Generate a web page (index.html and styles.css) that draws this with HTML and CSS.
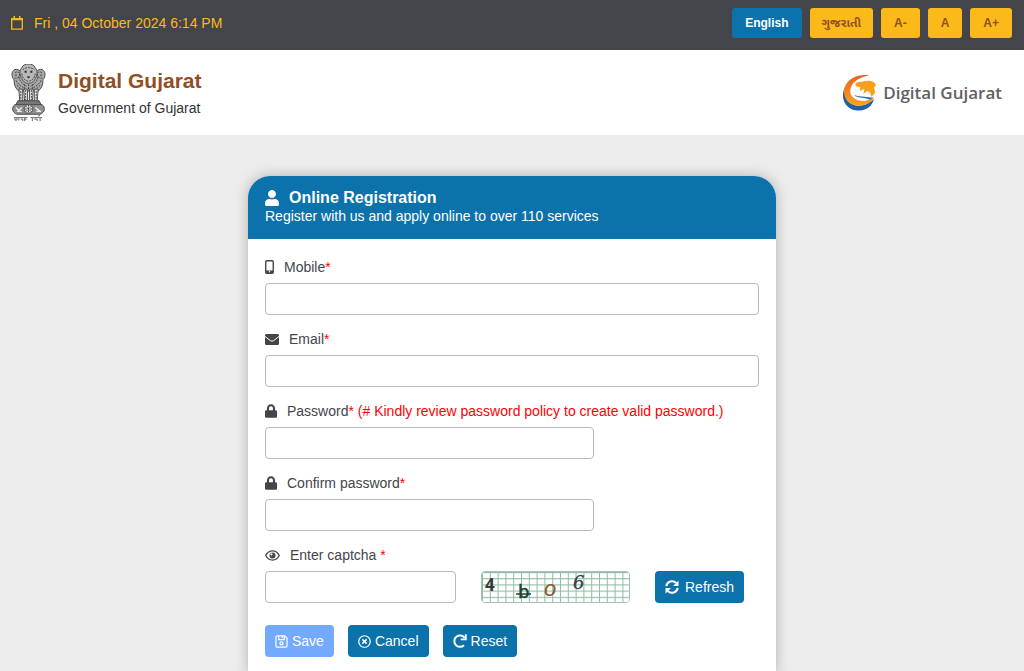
FILE: index.html
```html
<!DOCTYPE html>
<html lang="en">
<head>
<meta charset="utf-8">
<meta name="viewport" content="width=device-width, initial-scale=1">
<title>Digital Gujarat - Online Registration</title>
<link rel="stylesheet" href="styles.css">
</head>
<body>
<div class="topbar">
  <div class="date">
    <svg class="date-icon" viewBox="0 0 12 14" aria-hidden="true"><path d="M0.700 2.700h10.600v10.500H0.700z" fill="none" stroke="currentColor" stroke-width="1.300"/><path d="M0.700 2h10.600v2.200H0.700zM2.500 0h1.500v3H2.500zM8 0h1.500v3H8z" fill="currentColor"/></svg>
    <span>Fri , 04 October 2024 6:14 PM</span>
  </div>
  <div class="tools">
    <button class="tool tool-active" type="button">English</button>
    <button class="tool tool-gu" type="button" lang="gu">ગુજરાતી</button>
    <button class="tool" type="button">A-</button>
    <button class="tool" type="button">A</button>
    <button class="tool" type="button">A+</button>
  </div>
</div>

<header class="brand">
  <svg class="emblem" viewBox="0 0 36 60" role="img" aria-label="State emblem of India">
    <g fill="#a8a8a8" stroke="#4b4b4b" stroke-width="1">
      <path d="M9 7C4 3 0 8 1 12c0 3 2 3 2 5 0 5 2 9 5 11h20c3-2 5-6 5-11 0-2 2-2 2-5 1-4-3-9-8-5z"/>
      <path d="M11 4c1-3 4-4 7-4s6 1 7 4c3 3 2 8 0 11-2 4-4 5-7 5s-5-1-7-5c-2-3-3-8 0-11z" fill="#b8b8b8"/>
      <path d="M8 26h4l0 13H9zM13 26h4v13h-3zM19 26h4l-1 13h-3zM24 26h4l-1 13h-3z" fill="#ddd"/>
      <path d="M7 38h22l2 4H5z" fill="#777"/>
      <path d="M4 42h28c4 3 3 8-2 10H6c-5-2-6-7-2-10z" fill="#909090"/>
      <circle cx="18" cy="46.500" r="4.500" fill="#ddd"/>
    </g>
    <g fill="none" stroke="#444" stroke-width="1" stroke-dasharray="2 1">
      <path d="M4 9c3-2 5 0 5 3-1 3-4 3-6 2M32 9c-3-2-5 0-5 3 1 3 4 3 6 2M5 17c2 4 5 6 9 8M31 17c-2 4-5 6-9 8M8 13c1 5 4 8 8 10M28 13c-1 5-4 8-8 10M6 22l4 4M30 22l-4 4"/>
      <path d="M12 6c3-3 9-3 12 0M11 10c1 5 3 7 7 8 4-1 6-3 7-8M14 21v5M18 21v6M22 21v5M10 28v10M15 27v11M21 27v11M26 28v10"/>
      <path d="M18 42v9M14 46.500h8M15 43.500l6 6M21 43.500l-6 6"/>
    </g>
    <path d="M5 45l3 3 3-3M6 49h5M25 45l5 4M26 49h5" fill="none" stroke="#eee" stroke-width="1.400"/>
    <path d="M14 7h2v2h-2zM20 7h2v2h-2zM16 13h4l-2 2zM4 11h2v1H4zM30 11h2v1h-2z" fill="#222"/>
    <path d="M3 55.500h14M20 55.500h12M4 56v2h2v-2M8 56v2.500M10 57h2v2M14 56v3M16 57h-2M22 56v3M24 57h3v2M30 56v3M28 54l2-1" stroke="#666" stroke-width="1" fill="none"/>
  </svg>
  <div class="brand-text">
    <h1>Digital Gujarat</h1>
    <p>Government of Gujarat</p>
  </div>
  <div class="logo">
    <svg class="logo-mark" viewBox="0 0 36 38" aria-hidden="true">
      <defs><linearGradient id="orange" x1="0" y1="0" x2="0" y2="1"><stop offset="0" stop-color="#e9632a"/><stop offset="1" stop-color="#f9a41d"/></linearGradient></defs>
      <path d="M4 11C-4 25 5 38 18 37c8 0 13-5 15-12-4 4-9 7-15 7C5 32 1 22 4 11z" fill="#205fa6"/>
      <path d="M28 1C12-2 1 9 2 19c1 8 8 14 17 13 7-1 12-4 14-9-5 3-9 5-14 4C11 26 7 20 9 14 11 7 18 3 28 1z" fill="url(#orange)"/>
      <path d="M14 9c3-2 6-1 8-2 4-1 8-1 11 1l2 3-2 2 1 6-4 4c0-4-2-5-4-6l-4 3 1-5-5 2 1-4-5-1z" fill="#f8a01d"/>
      <path d="M12 21c6 2 11 1 20 3l-3 2c-6-3-11-1-17-5z" fill="#3174b5"/>
    </svg>
    <span>Digital Gujarat</span>
  </div>
</header>

<main class="page">
  <form class="card">
    <div class="card-head">
      <h2><svg class="icon-user" viewBox="0 0 448 512" aria-hidden="true"><path fill="currentColor" d="M224 256c70.700 0 128-57.300 128-128S294.700 0 224 0 96 57.300 96 128s57.300 128 128 128zm89.600 32h-16.700c-22.200 10.200-46.900 16-72.900 16s-50.600-5.800-72.900-16h-16.700C60.200 288 0 348.200 0 422.400V464c0 26.500 21.500 48 48 48h352c26.500 0 48-21.500 48-48v-41.600c0-74.200-60.200-134.400-134.400-134.400z"/></svg>Online Registration</h2>
      <p>Register with us and apply online to over 110 services</p>
    </div>
    <div class="card-body">
      <div class="field">
        <label for="mobile"><svg class="icon-mobile" viewBox="0 0 9 14" aria-hidden="true"><rect x="0.750" y="0.750" width="7.500" height="12.500" rx="1" fill="none" stroke="currentColor" stroke-width="1.400"/><path d="M1 10.500h7V13H1z" fill="currentColor"/><circle cx="4.500" cy="11.800" r="0.700" fill="#fff"/></svg><span>Mobile<b class="req">*</b></span></label>
        <input class="box" id="mobile" type="tel">
      </div>
      <div class="field">
        <label for="email"><svg class="icon-mail" viewBox="0 0 14 11" aria-hidden="true"><rect width="14" height="11" rx="1.300" fill="currentColor"/><path d="M0 2.500l5.500 4.200q1.500 1 3 0L14 2.500" fill="none" stroke="#fff" stroke-width="1"/></svg><span>Email<b class="req">*</b></span></label>
        <input class="box" id="email" type="email">
      </div>
      <div class="field">
        <label for="password"><svg class="icon-lock" viewBox="0 0 448 512" aria-hidden="true"><path fill="currentColor" d="M400 224h-24v-72C376 68.200 307.800 0 224 0S72 68.200 72 152v72H48c-26.500 0-48 21.500-48 48v192c0 26.500 21.500 48 48 48h352c26.500 0 48-21.500 48-48V272c0-26.500-21.500-48-48-48zm-104 0H152v-72c0-39.700 32.300-72 72-72s72 32.300 72 72v72z"/></svg><span>Password<b class="req">* (# Kindly review password policy to create valid password.)</b></span></label>
        <input class="box box-medium" id="password" type="password">
      </div>
      <div class="field">
        <label for="confirm"><svg class="icon-lock" viewBox="0 0 448 512" aria-hidden="true"><path fill="currentColor" d="M400 224h-24v-72C376 68.200 307.800 0 224 0S72 68.200 72 152v72H48c-26.500 0-48 21.500-48 48v192c0 26.500 21.500 48 48 48h352c26.500 0 48-21.500 48-48V272c0-26.500-21.500-48-48-48zm-104 0H152v-72c0-39.700 32.300-72 72-72s72 32.300 72 72v72z"/></svg><span>Confirm password<b class="req">*</b></span></label>
        <input class="box box-medium" id="confirm" type="password">
      </div>
      <div class="field">
        <label for="captcha"><svg class="icon-eye" viewBox="0 0 15 11" aria-hidden="true"><path d="M0.700 5.500C4-0.600 11-0.600 14.300 5.500 11 11.600 4 11.600 0.700 5.500z" fill="none" stroke="currentColor" stroke-width="1.300"/><circle cx="7.500" cy="5.500" r="3" fill="currentColor"/><circle cx="6.400" cy="4.400" r="1.100" fill="#fff"/></svg><span>Enter captcha <b class="req">*</b></span></label>
        <div class="captcha-row">
          <input class="box box-small" id="captcha" type="text">
          <svg class="captcha" viewBox="0 0 147 30" role="img" aria-label="Captcha">
            <defs><pattern id="grid" width="7.800" height="6.200" patternUnits="userSpaceOnUse"><path d="M0 0.500H7.800M0.500 0V6.200" stroke="#8fbda0" stroke-width="1"/></pattern></defs>
            <rect width="147" height="30" fill="#fff"/><rect width="147" height="30" fill="url(#grid)"/>
            <text x="3" y="19" class="captcha-sans" fill="#3d3833">4</text>
            <text x="36" y="26" class="captcha-mark" fill="#164432" stroke="#164432">b</text>
            <path d="M34 22h15" stroke="#164432" stroke-width="1.500"/>
            <text x="62" y="24" class="captcha-script" fill="#8a5c25">o</text>
            <text x="91" y="17" class="captcha-serif" fill="#34404d" stroke="#34404d">6</text>
          </svg>
          <button class="btn btn-refresh" type="button"><svg class="icon-refresh" viewBox="0 0 14 14" aria-hidden="true"><path d="M1.300 6.200A5.800 5.800 0 0 1 11.200 3M12.700 7.800A5.800 5.800 0 0 1 2.800 11" fill="none" stroke="currentColor" stroke-width="2"/><path d="M13.500 0.500v5.500H8zM0.500 13.500V8H6z" fill="currentColor"/></svg>Refresh</button>
        </div>
      </div>
      <div class="actions">
        <button class="btn" type="submit" disabled><svg class="icon-action" viewBox="0 0 14 14" aria-hidden="true"><path d="M2.500 1h8L13 3.500v8q0 1.500-1.500 1.500h-9Q1 13 1 11.500v-9Q1 1 2.500 1zM4 1v4h6V1M7.800 1v2.500" fill="none" stroke="currentColor" stroke-width="1.300"/><circle cx="7" cy="9" r="1.700" fill="none" stroke="currentColor" stroke-width="1.300"/></svg>Save</button>
        <button class="btn" type="button"><svg class="icon-action" viewBox="0 0 14 14" aria-hidden="true"><circle cx="7" cy="7" r="6.200" fill="none" stroke="currentColor" stroke-width="1.300"/><path d="M4.700 4.700l4.600 4.600M9.300 4.700L4.700 9.300" stroke="currentColor" stroke-width="1.600"/></svg>Cancel</button>
        <button class="btn" type="reset"><svg class="icon-reset" viewBox="0 0 14 14" aria-hidden="true"><path d="M11.800 4A5.700 5.700 0 1 0 11 11.200" fill="none" stroke="currentColor" stroke-width="2"/><path d="M13.700 0.300v6H7.700V4.500h4.200V0.300z" fill="currentColor"/></svg>Reset</button>
      </div>
    </div>
  </form>
</main>
</body>
</html>
```

FILE: styles.css
```css
* { box-sizing: border-box; }
html, body { min-height: 100%; }
body {
  margin: 0;
  background: #ededed;
  color: #44454a;
  font-family: "Liberation Sans", Arial, sans-serif;
  font-size: 14px;
  line-height: 20px;
}
button, input { font: inherit; }
h1, h2, p { margin: 0; }
svg { flex: none; display: block; }

.topbar {
  display: flex;
  align-items: center;
  justify-content: space-between;
  min-height: 50px;
  padding: 8px 12px 12px 11px;
  background: #44454a;
}
.date { display: flex; align-items: center; gap: 11px; color: #fcb91a; }
.date-icon { width: 12px; height: 14px; }
.tools { display: flex; gap: 8px; }
.tool {
  height: 30px;
  padding: 0 13px;
  border: 0;
  border-radius: 3px;
  background: #fcb91a;
  color: #8f5024;
  font-size: 12px;
  font-weight: bold;
}
.tool-active { background: #0c72ab; color: #fff; }
.tool-gu { padding: 0 12px; font-family: "Liberation Sans", "Noto Sans Gujarati", sans-serif; }

.brand {
  display: flex;
  align-items: center;
  min-height: 85px;
  padding: 0 22px 0 11px;
  background: #fff;
}
.emblem { width: 35px; height: 58px; margin-right: 12px; }
.brand-text { flex: 1; color: #333; }
.brand-text h1 { color: #8f5024; font-size: 21px; line-height: 30px; }
.brand-text p { line-height: 24px; }
.logo {
  display: flex;
  align-items: center;
  gap: 6px;
  color: #5f6165;
  font-family: "Open Sans", "Noto Sans", sans-serif;
  font-size: 17px;
  font-weight: 600;
}
.logo-mark { width: 35px; height: 38px; }

.page { padding: 41px 16px 0; }
.card {
  max-width: 528px;
  margin: 0 auto;
  overflow: hidden;
  border-radius: 22px 22px 0 0;
  background: #fff;
  box-shadow: 0 0 14px rgba(0, 0, 0, 0.25);
}
.card-head {
  padding: 13px 17px;
  background: #0c72ab;
  color: #fff;
}
.card-head h2 { display: flex; align-items: center; gap: 10px; font-size: 16px; line-height: 18px; }
.card-head p { line-height: 19px; }
.icon-user { width: 14px; height: 16px; }
.card-body { padding: 18px 17px; }

.field { display: flex; flex-direction: column; gap: 6px; margin-bottom: 14px; }
.field label { display: flex; align-items: center; gap: 10px; }
.req { color: #f00; font-weight: normal; }
.icon-mobile { width: 9px; height: 14px; }
.icon-mail { width: 14px; height: 11px; }
.icon-lock { width: 12px; height: 14px; }
.icon-eye { width: 15px; height: 11px; }
.box {
  width: 100%;
  height: 32px;
  padding: 4px 10px;
  border: 1px solid #b4bac6;
  border-radius: 4px;
  background: #fff;
}
.box-medium { width: calc(100% * 2 / 3); }
.box-small { width: 191px; }

.captcha-row { display: flex; flex-wrap: wrap; align-items: center; gap: 25px; }
.captcha {
  width: 149px;
  height: 32px;
  border: 1px solid #a9b9c0;
  border-radius: 4px;
}
.captcha-sans { font: bold 17px "Open Sans", sans-serif; }
.captcha-mark { font: 18px "DejaVu Sans", sans-serif; stroke-width: 0.5; }
.captcha-script { font: italic 22px "Liberation Sans", sans-serif; }
.captcha-serif { font: italic 18px "DejaVu Serif", serif; stroke-width: 0.3; }

.btn {
  display: flex;
  align-items: center;
  gap: 4px;
  height: 32px;
  padding: 0 10px;
  border: 0;
  border-radius: 4px;
  background: #0c72ab;
  color: #fff;
}
.btn:disabled { background: #73a9ff; }
.btn-refresh { gap: 6px; }
.icon-refresh { width: 14px; height: 14px; }
.icon-action { width: 13px; height: 13px; }
.icon-reset { width: 14px; height: 14px; }
.actions { display: flex; gap: 14px; padding-top: 8px; }
```
